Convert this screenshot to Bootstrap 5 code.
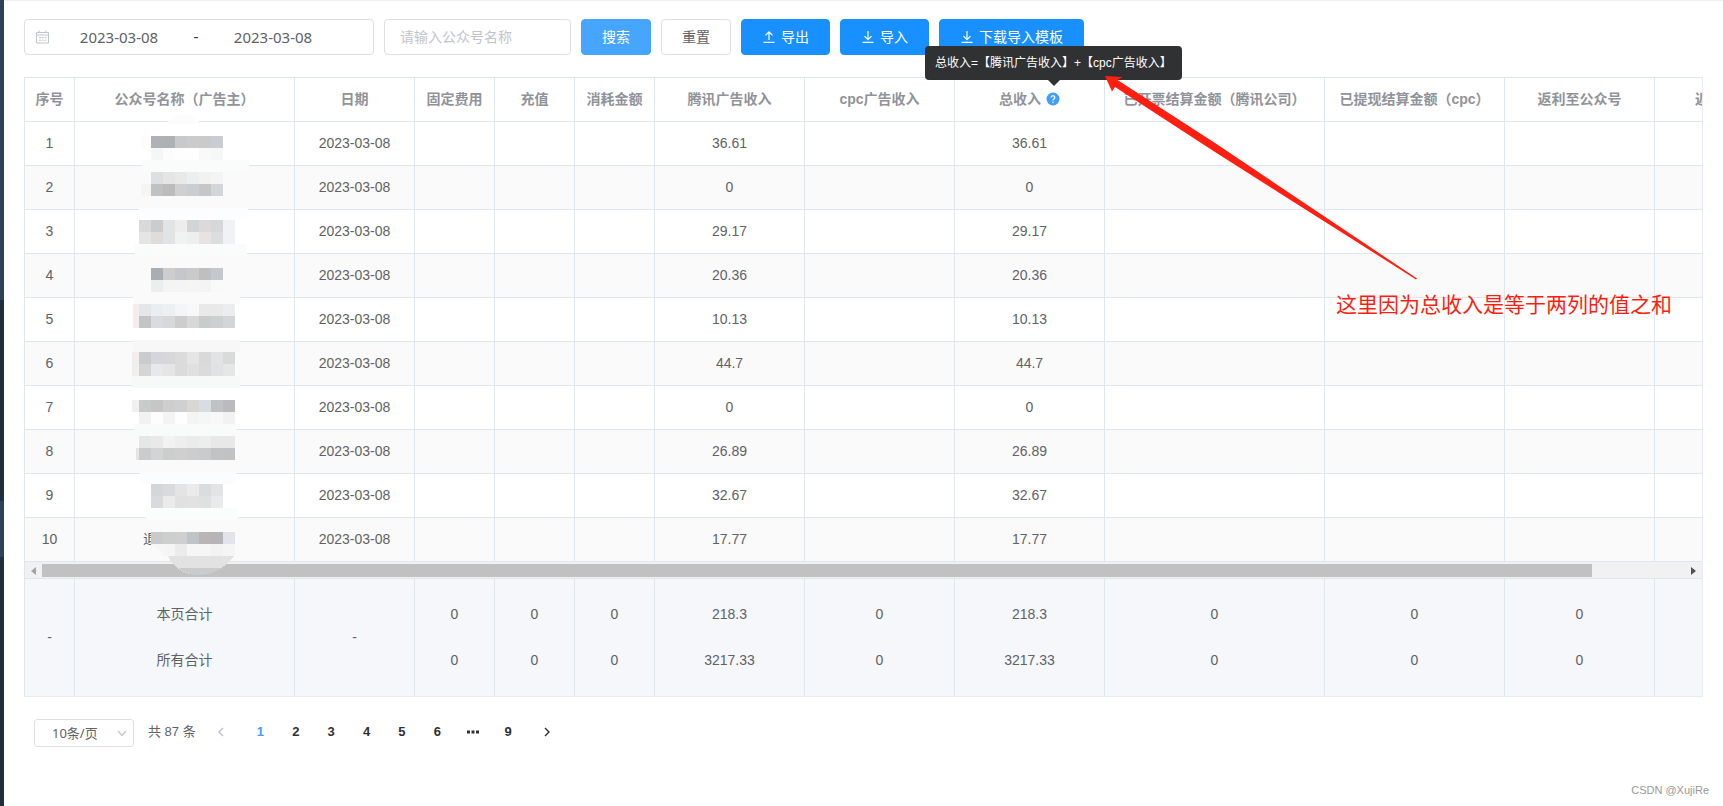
<!DOCTYPE html>
<html lang="zh-CN">
<head>
<meta charset="utf-8">
<meta name="viewport" content="width=device-width, initial-scale=1">
<title>广告收入结算</title>
<link href="https://cdn.jsdelivr.net/npm/bootstrap@5.3.0/dist/css/bootstrap.min.css" rel="stylesheet">
<style>
body{font:14px/20px "Liberation Sans","Noto Sans CJK SC",sans-serif;color:#606266;background:#fff;overflow:hidden}
.side-rail{width:4px;background:linear-gradient(#304156 300px,#1f2d3d 300px 501px,#304156 501px 557px,#1f2d3d 557px)}
.app-main{min-width:0;border-top:1px solid #f0f0f1;padding:18px 20px 0}
.tools{gap:10px;margin-bottom:22px}
.ctl{height:36px;border:1px solid #dcdfe6;border-radius:4px;background:#fff}
.date-range{width:350px;padding:0 10px}
.date-range input{width:140px;border:0;padding:0;text-align:center;font:15px/20px "Noto Sans",sans-serif;color:#606266;outline:0}
.date-range .sep{width:14px;text-align:center;color:#303133;font-size:15px}
.name-box{width:187px;padding:0 15px;font-size:14px;color:#606266}
.name-box::placeholder{color:#c0c4cc;opacity:1}
.tools .btn{height:36px;padding:0 20px;font-size:14px;line-height:20px;border-radius:4px}
.btn-find{--bs-btn-color:#fff;--bs-btn-bg:#46a6ff;--bs-btn-border-color:#46a6ff;--bs-btn-hover-color:#fff;--bs-btn-hover-bg:#66b1ff}
.btn-plain{--bs-btn-color:#606266;--bs-btn-bg:#fff;--bs-btn-border-color:#dcdfe6;--bs-btn-hover-bg:#ecf5ff}
.btn-file{--bs-btn-color:#fff;--bs-btn-bg:#1890ff;--bs-btn-border-color:#1890ff;--bs-btn-hover-color:#fff;--bs-btn-hover-bg:#46a6ff}
.btn svg{width:14px;height:14px;margin-right:5px}
.grid-box{border:1px solid #dfe6ec;border-color:#dfe6ec #e6ebf5 #e6ebf5 #dfe6ec}
.grid-clip{overflow:hidden}
.grid-table{width:1780px;table-layout:fixed;border-collapse:separate;border-spacing:0;margin:0;text-align:center}
.grid-table th,.grid-table td{border-right:1px solid #dfe6ec;border-bottom:1px solid #dfe6ec;height:44px;padding:0 0 2px;white-space:nowrap;vertical-align:middle}
.grid-table th{color:#909399;font-weight:700}
.grid-table tbody tr:nth-child(even) td{background:#fafafa}
.grid-table .cut{text-align:left;padding-left:40px}
.grid-table .lead-char{text-align:left;padding-left:68px}
.sum-table{background:#f5f7fa;border-top:1px solid #dfe6ec}
.grid-table.sum-table td{height:117px;line-height:46px;border-bottom:0}
.bar{height:16px;background:#f1f1f1;padding:2px 0 1px}
.bar span{width:17px;display:flex;align-items:center;justify-content:center}
.thumb{background:#c1c1c1}
.help{width:14px;height:14px;margin-left:5px}
.tip{left:900px;top:-32px;padding:7px 10px;background:#303133;color:#fff;font-size:12px;line-height:20px;border-radius:4px;white-space:nowrap;width:257px}
.tip::after{content:"";position:absolute;left:123px;top:34px;border:6px solid transparent;border-top-color:#303133;border-bottom:0}
.mosaic{left:75px;top:32px;pointer-events:none}
.pointer{left:1071px;top:-12px;pointer-events:none}
.note{left:1311px;top:212px;font-size:21px;line-height:30px;color:#ff1e10;white-space:nowrap}
.pager{padding:22px 10px 0;font-size:13px;color:#606266}
.size-box{width:100px;height:28px;border:1px solid #dcdfe6;border-radius:3px;padding:0 25px 0 17px;font:13px/20px "Noto Sans","Noto Sans CJK SC",sans-serif;color:#606266;appearance:none;background:#fff}
.size-wrap svg{right:7px;top:9px;pointer-events:none}
.pager .total{margin:0 8px 2px 14px}
.pages{list-style:none;margin:0;padding:0;width:361px}
.pages li{flex:1}
.pages .step{flex:0 0 35px}
.pages .step:first-child{margin-right:4px}
.pages .step:last-child{margin-left:4px}
.pages a{display:flex;align-items:center;justify-content:center;height:28px;padding-bottom:2px;color:#303133;font-weight:700;text-decoration:none}
.pages .on a{color:#409eff}
.mark-by{right:14px;bottom:7px;font-size:11px;line-height:18px;color:#999}
</style>
</head>
<body>
<div class="d-flex min-vh-100 position-relative">
<div class="side-rail flex-shrink-0"></div>
<main class="app-main flex-grow-1">
<form class="tools d-flex align-items-center">
<div class="ctl date-range d-flex align-items-center">
<svg width="14" height="14" viewBox="0 0 14 14" fill="none" stroke="#c0c4cc"><path d="M1.500 2.500h12v10.500h-12zM1.500 5h12M4 .5v2M11 .5v2M4 7.500h2M6.700 7.500h2M9.500 7.500h2M4 10.200h2M6.700 10.200h2M9.500 10.200h2"/></svg>
<input type="text" value="2023-03-08" aria-label="开始日期"><span class="sep">-</span><input type="text" value="2023-03-08" aria-label="结束日期">
</div>
<input class="ctl name-box" type="text" placeholder="请输入公众号名称" aria-label="公众号名称">
<button type="button" class="btn btn-find">搜索</button>
<button type="button" class="btn btn-plain">重置</button>
<button type="button" class="btn btn-file d-flex align-items-center"><svg viewBox="0 0 14 14" fill="none" stroke="#fff" stroke-width="1.200"><path d="M7 10V2M3.500 5.300 7 1.800l3.500 3.500M1.500 12.400h11"/></svg>导出</button>
<button type="button" class="btn btn-file d-flex align-items-center"><svg viewBox="0 0 14 14" fill="none" stroke="#fff" stroke-width="1.200"><path d="M7 1v8.500M3.500 6.200 7 9.700l3.500-3.500M1.500 12.400h11"/></svg>导入</button>
<button type="button" class="btn btn-file d-flex align-items-center"><svg viewBox="0 0 14 14" fill="none" stroke="#fff" stroke-width="1.200"><path d="M7 1v8.500M3.500 6.200 7 9.700l3.500-3.500M1.500 12.400h11"/></svg>下载导入模板</button>
</form>
<section class="grid-box position-relative">
<div class="grid-clip">
<table class="grid-table" id="data"><colgroup></colgroup>
<thead><tr><th>序号</th><th>公众号名称（广告主）</th><th>日期</th><th>固定费用</th><th>充值</th><th>消耗金额</th><th>腾讯广告收入</th><th>cpc广告收入</th><th><span class="d-inline-flex align-items-center">总收入<svg class="help" viewBox="0 0 14 14"><circle cx="7" cy="7" r="6.500" fill="#409eff"/><path d="M5.200 5.500a1.800 1.800 0 1 1 2.700 1.600c-.6.400-.9.700-.9 1.300" fill="none" stroke="#fff" stroke-width="1.200"/><circle cx="7" cy="10.300" r=".8" fill="#fff"/></svg></span></th><th>已开票结算金额（腾讯公司）</th><th>已提现结算金额（cpc）</th><th>返利至公众号</th><th class="cut">返</th></tr></thead>
<tbody></tbody></table>
</div>
<div class="bar d-flex">
<span><svg width="5" height="8"><path d="M5 0v8L0 4z" fill="#a3a3a3"/></svg></span>
<div class="thumb" style="width:92.4%"></div>
<span class="ms-auto"><svg width="5" height="8"><path d="M0 0v8l5-4z" fill="#505050"/></svg></span>
</div>
<div class="grid-clip"><table class="grid-table sum-table" id="sums"><colgroup></colgroup><tbody></tbody></table></div>
<svg class="mosaic position-absolute" width="180" height="470" viewBox="100 110 180 470" shape-rendering="crispEdges"></svg>
<div class="tip position-absolute" role="tooltip">总收入=【腾讯广告收入】+【cpc广告收入】</div>
<svg class="pointer position-absolute" width="330" height="220" viewBox="1096 66 330 220"><path d="M1105 76l17.500 1-5 3L1215 143 1417 278.500l-1 1L1215 152 1115 87l-3 4.500z" fill="#ff1e10"/></svg>
<div class="note position-absolute">这里因为总收入是等于两列的值之和</div>
</section>
<nav class="pager d-flex align-items-center" aria-label="分页">
<div class="size-wrap position-relative"><select class="size-box" aria-label="每页条数"><option>10条/页</option></select><svg class="position-absolute" width="10" height="10" viewBox="0 0 10 10" fill="none" stroke="#c0c4cc" stroke-width="1.200"><path d="M1 3l4 4.500L9 3"/></svg></div>
<span class="total">共 87 条</span>
<ul class="pages d-flex">
<li class="step"><a href="#" aria-label="上一页"><svg width="8" height="10" viewBox="0 0 8 10" fill="none" stroke="#c0c4cc" stroke-width="1.600"><path d="M6 1 2 5l4 4"/></svg></a></li>
<li class="on"><a href="#">1</a></li><li><a href="#">2</a></li><li><a href="#">3</a></li><li><a href="#">4</a></li><li><a href="#">5</a></li><li><a href="#">6</a></li>
<li><a href="#" aria-label="更多"><svg width="12" height="4"><path d="M0 .5h3v3H0zM4.500.5h3v3h-3zM9 .5h3v3H9z" fill="#303133"/></svg></a></li>
<li><a href="#">9</a></li>
<li class="step"><a href="#" aria-label="下一页"><svg width="8" height="10" viewBox="0 0 8 10" fill="none" stroke="#303133" stroke-width="1.400"><path d="m2 1 4 4-4 4"/></svg></a></li>
</ul>
</nav>
</main>
<div class="mark-by position-absolute">CSDN @XujiRe</div>
</div>
<script src="https://cdn.jsdelivr.net/npm/bootstrap@5.3.0/dist/js/bootstrap.bundle.min.js"></script>
<script>
const widths=[50,220,120,80,80,80,150,150,150,220,180,150,150];
document.querySelectorAll('colgroup').forEach(g=>g.innerHTML=widths.map(w=>`<col style="width:${w}px">`).join(''));
const income=['36.61','0','29.17','20.36','10.13','44.7','0','26.89','32.67','17.77'];
document.querySelector('#data tbody').innerHTML=income.map((v,i)=>{
  const name=i===9?'<td class="lead-char">退</td>':'<td></td>';
  return `<tr><td>${i+1}</td>${name}<td>2023-03-08</td><td></td><td></td><td></td><td>${v}</td><td></td><td>${v}</td><td></td><td></td><td></td><td></td></tr>`;
}).join('');
const two=(a,b)=>`<td>${a}<br>${b}</td>`,z=two(0,0),t=two('218.3','3217.33');
document.querySelector('#sums tbody').innerHTML='<tr><td>-</td>'+two('本页合计','所有合计')+'<td>-</td>'+z+z+z+t+z+t+z+z+z+'<td></td></tr>';

// Pale strips that hide the row lines: x, y, width, height, colour
const strips=[[142,160,107,12,'fafcfb'],[139,208,109,12,'fbfdfe'],[135,244,112,12,'fafcfb'],[133,296,107,8,'fafafa'],[133,340,107,12,'f7f7f7'],[132,376,108,12,'f7f9f8'],[134,424,102,12,'f9fbfa'],[140,472,96,12,'fafcfe'],[146,508,92,12,'fafdfc'],
[133,304,6,24,'f1efed'],[132,352,7,24,'f0efee'],[132,400,7,12,'f0f0f0'],[136,448,3,12,'e5e5e5'],[141,136,10,12,'fdfcfb'],[141,184,10,12,'f6f5f4']];
// Pixelated names: x, y, block colours
const blocks=[[151,136,'afb1b5 afb0b2 c7c9cb cbcbcb cacaca c8cdd3'],[151,148,'f5f6f6 fcfcfc fefefe fefefe f9f9f9 f6f8f8'],
[151,172,'dedfe1 e5e5e5 e8e9e9 ecefee f2f2f2 f4f4f4'],[151,184,'bfc1c3 bcbcbc d0d0d1 cbced0 c6c6c6 d1d6d9'],
[139,220,'d9d9da cbccce e1e3e5 efedeb d1d5d8 dcd9d8 d6d7da f1f2f5'],[139,232,'e5e5e5 dfdcd9 e1e4e6 f1f2f2 ecefee e7e3e2 dcdddf f1f2f5'],
[151,268,'a8aeb2 cdcdcd c6c7ca cacaca bfbfc0 c3c8cc'],[151,280,'eceeed f4f4f4 f4f4f4 f5f5f5 f4f4f4 f8faf9'],
[139,304,'e4e6e8 ebeef1 edf0f0 f4f5f8 f8f8f8 e9e9e9 e9e9e9 ecedf0'],[139,316,'c2c4c6 d9dbe0 d6d9d8 cdcdcd d8d8d8 cacccb cecfd1 d3d5d7'],
[139,352,'cacbce d4d6db d7d7d7 dbdbdb e5e5e5 d9d9d9 e1e3e4 d9dbda'],[139,364,'d5d5d5 e6e8ea e5e5e5 dbdbdb e0e0e0 dbdbdb e0e2e4 e5e7e6'],
[139,400,'c9cbca c6c6c6 cecece cfd0d2 dad6d3 d8dde1 c1c2c4 bababf'],[139,412,'f2f2f2 fdfdfd f4f4f4 fefefe f4f4f4 f5f7f6 f8f8f8 f2f2f2'],
[139,436,'e5e7e6 e9e9e9 f2f2f2 eeeeee ebebeb eceeed e8e8e8 e8e8e8'],[139,448,'cacccd d3d4d5 cccecd cfcfcf cccdce c9cbcc c2c3c4 c1c2c4'],
[151,484,'d4d6d9 d9dadd e4e4e4 ebebeb dadcdf e2e4e6'],[151,496,'d9dadb ebebeb e1e1e1 e2e2e2 dfe1e0 e8eaeb'],
[151,532,'c8cacb cdcfcf cfcfd0 bfc4c7 b9b5b4 b5b5b7 e3e4ea'],[163,544,'f5f5f5 ebebeb f6f6f6 f6f6f6 f2f2f2 f5f5f5']];
const r=(x,y,w,h,c)=>`<rect x="${x}" y="${y}" width="${w}" height="${h}" fill="#${c}"/>`;
document.querySelector('.mosaic').innerHTML='<path d="M166 124q17-21 35 0z" fill="#fcfcfc"/>'+strips.map(s=>r(...s)).join('')
 +blocks.map(([x,y,c])=>c.split(' ').map((k,i)=>r(x+12*i,y,12,12,k)).join('')).join('')
 +'<path d="M151 544h16v9q-10-1-16-9z" fill="#f6f6f6"/><path d="M168 556h66l-6 7q-14 12-29 12-22 0-31-19z" fill="#e2e2e2"/><path d="M178 568h44q-11 7-23 7-12 0-21-7z" fill="#cacbcc"/>';
</script>
</body>
</html>
